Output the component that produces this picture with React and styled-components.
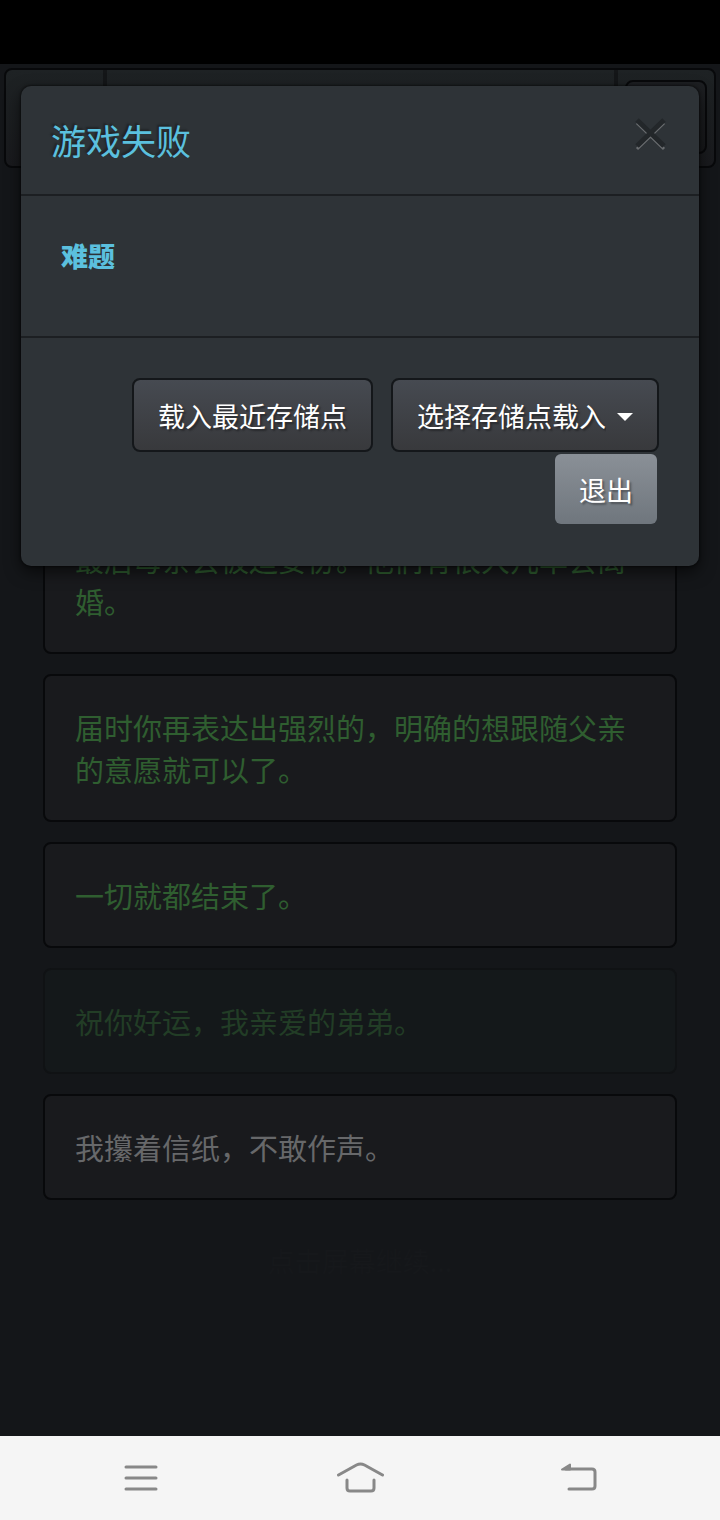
import styled, { createGlobalStyle, css } from "styled-components";

const GlobalStyle = createGlobalStyle`
    * {
        box-sizing: border-box;
    }
    body {
        margin: 0;
        background: #141619;
        color: #6d6e70;
        font-family: "Noto Sans CJK SC", sans-serif;
        font-size: 29px;
        line-height: 42px;
    }
    button, select {
        font: inherit;
        color: inherit;
        cursor: pointer;
    }
    h1, h2, p {
        margin: 0;
    }
`;

const messages = [
    { text: "最后母亲会被迫妥协。他们有很大几率会离婚。", tone: "letter" },
    { text: "届时你再表达出强烈的，明确的想跟随父亲的意愿就可以了。", tone: "letter" },
    { text: "一切就都结束了。", tone: "letter" },
    { text: "祝你好运，我亲爱的弟弟。", tone: "faded" },
    { text: "我攥着信纸，不敢作声。", tone: "plain" },
];

const tones = {
    letter: css`
        color: #2f5e30;
        background: #191a1d;
        border-color: #08090b;
    `,
    faded: css`
        color: #223d26;
        background: #14181a;
        border-color: #101214;
    `,
    plain: css`
        color: #67686a;
        background: #191a1d;
        border-color: #08090b;
    `,
};

const Screen = styled.div`
    position: relative;
    display: flex;
    flex-direction: column;
    min-height: 100vh;
`;

const StatusBar = styled.div`
    height: 64px;
    background: #000;
`;

const Game = styled.main`
    flex: 1;
    padding: 4px;
`;

const TopBar = styled.header`
    display: flex;
    height: 100px;
    border: 2px solid #08090b;
    border-radius: 8px;
    background: linear-gradient(#1e2224, #191a1d);
`;

const TopSlot = styled.div`
    flex: ${(props) => (props.$grow ? 1 : "none")};
    width: ${(props) => props.$width || "auto"};
    padding: 10px 7px;
    border-left: ${(props) => (props.$divided ? "4px solid #141618" : "none")};
`;

const MenuButton = styled.button`
    display: block;
    width: 82px;
    height: 74px;
    border: 2px solid #08090b;
    border-radius: 8px;
    background: linear-gradient(#1d1f22, #17181a);
`;

const MessageList = styled.section`
    display: flex;
    flex-direction: column;
    gap: 20px;
    padding: 338px 39px 0;
`;

const Message = styled.p`
    padding: 30px;
    border: 2px solid;
    border-radius: 8px;
    ${(props) => tones[props.$tone]}
`;

const Hint = styled.p`
    margin-top: 40px;
    font-size: 27px;
    text-align: center;
    color: #16181b;
`;

const Modal = styled.div`
    position: absolute;
    top: 86px;
    left: 21px;
    right: 21px;
    border-radius: 10px;
    background: #2e3337;
    box-shadow: 0 6px 16px rgba(0, 0, 0, 0.6), 0 0 2px 1px rgba(0, 0, 0, 0.4);
`;

const ModalHeader = styled.div`
    display: flex;
    justify-content: space-between;
    align-items: flex-start;
    padding: 30px 32px 30px 30px;
    border-bottom: 2px solid #1c1f22;
`;

const ModalTitle = styled.h1`
    font-size: 35px;
    font-weight: 400;
    line-height: 48px;
    color: #5bc0de;
    text-shadow: -2px -2px 2px rgba(0, 0, 0, 0.3);
`;

const CloseButton = styled.button`
    display: flex;
    padding: 0;
    border: 0;
    background: none;
`;

const ModalBody = styled.div`
    padding: 40px 40px 60px;
    border-bottom: 2px solid #1c1f22;
`;

const EndingName = styled.h2`
    font-size: 27px;
    font-weight: 900;
    line-height: 40px;
    color: #5bc0de;
`;

const ModalFooter = styled.div`
    display: flex;
    flex-wrap: wrap;
    justify-content: flex-end;
    column-gap: 18px;
    padding: 40px;
`;

const control = css`
    height: 74px;
    padding: 2px 24px 0;
    border: 2px solid #14171a;
    border-radius: 8px;
    background: linear-gradient(#464a51, #38393c) padding-box;
    color: #fff;
    font-size: 27px;
    text-shadow: 2px 2px 2px rgba(0, 0, 0, 0.35);
`;

const Button = styled.button`
    ${control}
    ${(props) => props.$light && css`
        border-color: transparent;
        background: linear-gradient(#8a9097, #6f767d) padding-box;
    `}
`;

const SelectWrap = styled.label`
    position: relative;
    display: flex;
    align-items: center;
    svg {
        position: absolute;
        top: 35px;
        right: 26px;
        pointer-events: none;
    }
`;

const Select = styled.select`
    ${control}
    appearance: none;
    padding-right: 51px;
`;

const SystemNav = styled.nav`
    display: flex;
    justify-content: space-around;
    align-items: center;
    height: 84px;
    padding: 0 30px;
    background: #f5f5f5;
`;

const NavButton = styled.button`
    display: flex;
    padding: 0;
    border: 0;
    background: none;
    svg {
        fill: none;
        stroke: #888;
        stroke-width: 3;
        stroke-linecap: round;
        stroke-linejoin: round;
    }
`;

function CloseIcon() {
    return (
        <svg width="34" height="36" viewBox="0 0 34 36" fill="none">
            <path d="M4 7 31 33M31 7 4 33" stroke="#6a6d70" strokeWidth="3" />
            <path d="M4 4 31 30M31 4 4 30" stroke="#23272a" strokeWidth="5" />
        </svg>
    );
}

function GameOver() {
    return (
        <Modal role="dialog" aria-labelledby="game-over">
            <ModalHeader>
                <ModalTitle id="game-over">游戏失败</ModalTitle>
                <CloseButton type="button" aria-label="关闭">
                    <CloseIcon />
                </CloseButton>
            </ModalHeader>
            <ModalBody>
                <EndingName>难题</EndingName>
            </ModalBody>
            <ModalFooter>
                <Button type="button">载入最近存储点</Button>
                <SelectWrap>
                    <Select aria-label="选择存储点载入">
                        <option>选择存储点载入</option>
                    </Select>
                    <svg width="16" height="8" viewBox="0 0 16 8">
                        <path d="M0 0h16L8 8z" fill="#fff" />
                    </svg>
                </SelectWrap>
                <Button type="button" $light>退出</Button>
            </ModalFooter>
        </Modal>
    );
}

function BottomNav() {
    return (
        <SystemNav>
            <NavButton type="button" aria-label="菜单">
                <svg width="48" height="32" viewBox="0 0 48 32">
                    <path d="M10 5h30M10 16h30M10 27h30" />
                </svg>
            </NavButton>
            <NavButton type="button" aria-label="主页">
                <svg width="48" height="32" viewBox="0 0 48 32">
                    <path d="M2 13 20 3q4-2 8 0l18 10" transform="translate(.5 0)" />
                    <path d="M11 18v8q0 3 3 3h21q3 0 3-3v-8" />
                </svg>
            </NavButton>
            <NavButton type="button" aria-label="返回">
                <svg width="48" height="32" viewBox="0 0 48 32">
                    <path d="M10 7h26q3 0 3 3v14q0 3-3 3H13" />
                    <path d="M6 7.500 14 2.500v5z" fill="#888" strokeWidth="2" />
                </svg>
            </NavButton>
        </SystemNav>
    );
}

export default function App() {
    return (
        <>
            <GlobalStyle />
            <Screen>
                <StatusBar />
                <Game>
                    <TopBar>
                        <TopSlot $width="97px" />
                        <TopSlot $divided $grow />
                        <TopSlot $divided>
                            <MenuButton type="button" aria-label="设置" />
                        </TopSlot>
                    </TopBar>
                    <MessageList>
                        {messages.map((message) => (
                            <Message key={message.text} $tone={message.tone}>
                                {message.text}
                            </Message>
                        ))}
                    </MessageList>
                    <Hint>点击屏幕继续...</Hint>
                </Game>
                <BottomNav />
                <GameOver />
            </Screen>
        </>
    );
}
